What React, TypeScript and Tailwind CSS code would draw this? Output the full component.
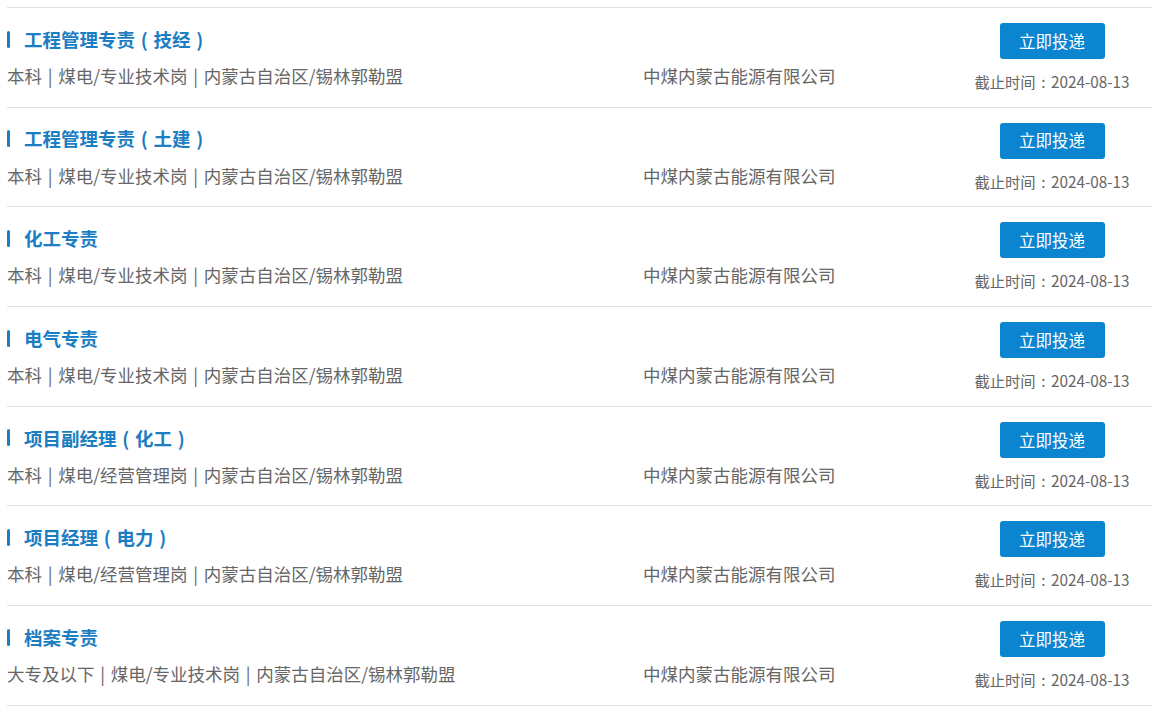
import React from "react";

const jobs = [
  { title: "工程管理专责", sub: "技经", info: "本科 | 煤电/专业技术岗 | 内蒙古自治区/锡林郭勒盟" },
  { title: "工程管理专责", sub: "土建", info: "本科 | 煤电/专业技术岗 | 内蒙古自治区/锡林郭勒盟" },
  { title: "化工专责", sub: "", info: "本科 | 煤电/专业技术岗 | 内蒙古自治区/锡林郭勒盟" },
  { title: "电气专责", sub: "", info: "本科 | 煤电/专业技术岗 | 内蒙古自治区/锡林郭勒盟" },
  { title: "项目副经理", sub: "化工", info: "本科 | 煤电/经营管理岗 | 内蒙古自治区/锡林郭勒盟" },
  { title: "项目经理", sub: "电力", info: "本科 | 煤电/经营管理岗 | 内蒙古自治区/锡林郭勒盟" },
  { title: "档案专责", sub: "", info: "大专及以下 | 煤电/专业技术岗 | 内蒙古自治区/锡林郭勒盟" },
];

function Paren({ c }: { c: string }) {
  return <span className="inline-block w-[1em] text-center">{c}</span>;
}

export default function App() {
  return (
    <div
      className="w-[1174px] h-[710px] bg-white overflow-hidden"
      style={{ fontFamily: '"Noto Sans CJK SC", "Noto Sans", sans-serif' }}
    >
      <div className="ml-[7px] mt-[7px] w-[1145px] border-t border-[#e2e2e2]">
        {jobs.map((j, i) => (
          <div key={i} className="flex h-[99.7px] border-b border-[#e2e2e2]">
            <div className="flex-1 flex flex-col">
              <div className="flex items-center h-[34px] mt-[14px]">
                <span className="w-[3px] h-[17px] rounded-sm bg-[#1b7dc2]" />
                <span className="ml-[14px] text-[18.5px] font-bold text-[#1b7dc2] leading-none whitespace-nowrap">
                  {j.title}
                  {j.sub && (
                    <>
                      <Paren c="(" />
                      {j.sub}
                      <Paren c=")" />
                    </>
                  )}
                </span>
              </div>
              <div className="flex mt-[3px] text-[17.5px] text-[#666] leading-[34px]">
                <span className="w-[636px] [word-spacing:1.8px] whitespace-nowrap">{j.info}</span>
                <span className="whitespace-nowrap">中煤内蒙古能源有限公司</span>
              </div>
            </div>
            <div className="w-[200px] flex flex-col items-center pt-[15px]">
              <button className="w-[105px] h-[36px] rounded-[3px] bg-[#0b85d0] text-white text-[16.5px] leading-none">
                立即投递
              </button>
              <div className="mt-[15px] text-[15.3px] text-[#666] leading-none whitespace-nowrap">
                截止时间<Paren c=":" />2024-08-13
              </div>
            </div>
          </div>
        ))}
      </div>
    </div>
  );
}
